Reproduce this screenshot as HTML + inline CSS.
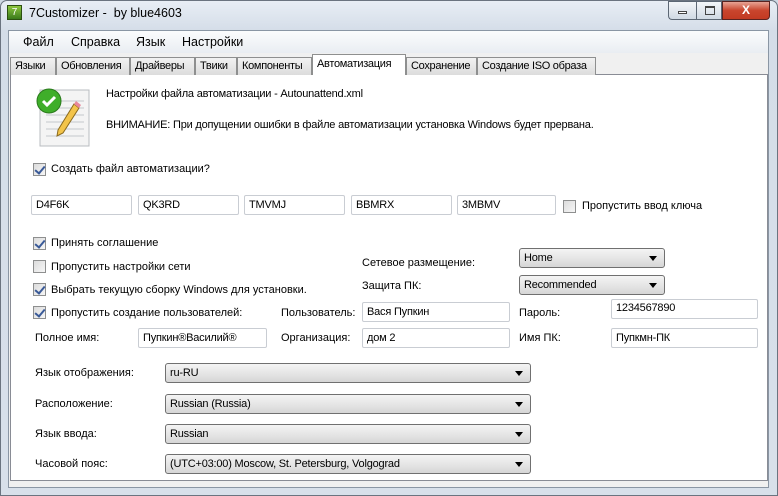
<!DOCTYPE html>
<html><head><meta charset="utf-8"><style>
*{box-sizing:border-box;margin:0;padding:0}
body{width:778px;height:496px;overflow:hidden;background:#cfd9e4;font-family:"Liberation Sans",sans-serif;font-size:11px;color:#000;position:relative}
.a{position:absolute;white-space:nowrap}
.frame{position:absolute;left:0;top:0;width:778px;height:496px;background:linear-gradient(#e8eef5,#d4dde8 30px,#d8e0ea);border:1px solid #6b7480;border-radius:7px 7px 0 0}
.client{position:absolute;left:8px;top:30px;width:761px;height:458px;background:#f0f0f0;border:1px solid #8a96a4}
.menu{position:absolute;left:9px;top:31px;width:759px;height:22px;background:linear-gradient(#fbfcfd,#e9edf2)}
.tab{position:absolute;top:57px;height:18px;background:linear-gradient(#f2f2f2,#dcdcdc);border:1px solid #8e8f8f;border-bottom:none;padding:2px 0 0 4px;font-size:11px;letter-spacing:-0.3px;white-space:nowrap;overflow:hidden}
.page{position:absolute;left:10px;top:74px;width:758px;height:407px;background:#fff;border:1px solid #898c95}
.cb{position:absolute;width:13px;height:13px;border:1px solid #8e8f8f;background:linear-gradient(135deg,#dcdcdc,#f6f6f6)}
.cb.c::after{content:"";position:absolute;left:3px;top:0px;width:4px;height:8px;border:solid #3a5a98;border-width:0 2px 2px 0;transform:rotate(40deg)}
.tb{position:absolute;height:20px;border:1px solid #c9cdd3;border-radius:2px;background:#fff;padding:3px 0 0 4px;font-size:11px;letter-spacing:-0.2px;white-space:nowrap}
.dd{position:absolute;height:20px;border:1px solid #707070;border-radius:3px;background:linear-gradient(#f4f4f4,#e6e6e6 50%,#d6d6d6);padding:3px 0 0 4px;font-size:11px;letter-spacing:-0.2px}
.dd::after{content:"";position:absolute;right:7px;top:7px;border:4px solid transparent;border-top:5px solid #000;border-bottom:none}
.btn{position:absolute;top:1px;height:19px;border:1px solid #5c6774;background:linear-gradient(#f3f6f9,#d0d9e3)}
</style></head><body>
<div class="frame"></div>
<div class="a" style="left:7px;top:5px;width:15px;height:15px;background:linear-gradient(#8cc63f,#3a7a1a);border:1px solid #2c5010;color:#fff;font-size:10px;text-align:center;line-height:13px">7</div>
<div class="a" style="left:29px;top:6px;font-size:12.5px">7Customizer -&nbsp; by blue4603</div>
<div class="btn" style="left:668px;width:28px;border-radius:0 0 0 4px;border-right:none"><div style="position:absolute;left:9px;top:9px;width:9px;height:3px;border:1px solid #444;background:#fff"></div></div>
<div class="btn" style="left:696px;width:26px;"><div style="position:absolute;left:8px;top:4px;width:10px;height:9px;border:1px solid #444;border-top-width:2px"></div></div>
<div class="btn" style="left:722px;width:48px;border-radius:0 0 4px 0;background:linear-gradient(#e8a495,#c9452d 50%,#c23a22);border-color:#5a2320;color:#fff;text-align:center;font-weight:bold;font-size:12px;line-height:16px">X</div>
<div class="client"></div>
<div class="menu"></div>
<div class="a" style="left:23px;top:35px;font-size:12.5px">Файл</div>
<div class="a" style="left:71px;top:35px;font-size:12.5px">Справка</div>
<div class="a" style="left:136px;top:35px;font-size:12.5px">Язык</div>
<div class="a" style="left:182px;top:35px;font-size:12.5px">Настройки</div>
<div class="page"></div>
<div class="tab" style="left:10px;width:46px">Языки</div>
<div class="tab" style="left:56px;width:74px">Обновления</div>
<div class="tab" style="left:130px;width:65px">Драйверы</div>
<div class="tab" style="left:195px;width:42px">Твики</div>
<div class="tab" style="left:237px;width:75px">Компоненты</div>
<div class="tab" style="left:312px;top:54px;height:21px;width:94px;background:#fff;padding-top:3px">Автоматизация</div>
<div class="tab" style="left:406px;width:71px">Сохранение</div>
<div class="tab" style="left:477px;width:119px">Создание ISO образа</div>
<svg class="a" style="left:34px;top:87px" width="58" height="62" viewBox="0 0 58 62">
<rect x="6" y="3" width="49" height="56" fill="#f4f4f4" stroke="#b9bcc0"/>
<g stroke="#c4c8cc"><line x1="12" y1="14" x2="50" y2="14"/><line x1="12" y1="21" x2="50" y2="21"/><line x1="12" y1="28" x2="50" y2="28"/><line x1="12" y1="35" x2="50" y2="35"/><line x1="12" y1="42" x2="50" y2="42"/><line x1="12" y1="49" x2="50" y2="49"/></g>
<circle cx="15" cy="14" r="12" fill="#3fae2a" stroke="#2a7a1c"/>
<path d="M9 14l4 4 8-8" stroke="#fff" stroke-width="3" fill="none"/>
<path d="M40 17l5 4-16 25-6 3 1-6z" fill="#f3c44a" stroke="#8a6a1e"/>
<path d="M40 17l5 4 2-3-5-4z" fill="#e9879a"/>
</svg>
<div class="a" style="left:106px;top:88px;letter-spacing:-0.2px">Настройки файла автоматизации - Autounattend.xml</div>
<div class="a" style="left:106px;top:119px;letter-spacing:-0.2px">ВНИМАНИЕ: При допущении ошибки в файле автоматизации установка Windows будет прервана.</div>
<div class="cb c" style="left:33px;top:163px"></div><div class="a" style="left:51px;top:163px">Создать файл автоматизации?</div>
<div class="tb" style="left:31px;top:195px;width:101px">D4F6K</div>
<div class="tb" style="left:138px;top:195px;width:101px">QK3RD</div>
<div class="tb" style="left:244px;top:195px;width:101px">TMVMJ</div>
<div class="tb" style="left:351px;top:195px;width:101px">BBMRX</div>
<div class="tb" style="left:457px;top:195px;width:99px">3MBMV</div>
<div class="cb" style="left:563px;top:200px"></div><div class="a" style="left:582px;top:200px">Пропустить ввод ключа</div>
<div class="cb c" style="left:33px;top:237px"></div><div class="a" style="left:51px;top:237px">Принять соглашение</div>
<div class="cb" style="left:33px;top:260px"></div><div class="a" style="left:51px;top:261px">Пропустить настройки сети</div>
<div class="cb c" style="left:33px;top:283px"></div><div class="a" style="left:51px;top:284px">Выбрать текущую сборку Windows для установки.</div>
<div class="cb c" style="left:33px;top:306px"></div><div class="a" style="left:51px;top:307px">Пропустить создание пользователей:</div>
<div class="a" style="left:362px;top:257px">Сетевое размещение:</div>
<div class="a" style="left:362px;top:280px">Защита ПК:</div>
<div class="dd" style="left:519px;top:248px;width:146px">Home</div>
<div class="dd" style="left:519px;top:275px;width:146px">Recommended</div>
<div class="a" style="left:281px;top:307px">Пользователь:</div>
<div class="tb" style="left:362px;top:302px;width:148px">Вася Пупкин</div>
<div class="a" style="left:519px;top:307px">Пароль:</div>
<div class="tb" style="left:611px;top:299px;width:147px;padding-top:2px">1234567890</div>
<div class="a" style="left:35px;top:332px">Полное имя:</div>
<div class="tb" style="left:138px;top:328px;width:129px">Пупкин®Василий®</div>
<div class="a" style="left:281px;top:332px">Организация:</div>
<div class="tb" style="left:362px;top:328px;width:148px">дом 2</div>
<div class="a" style="left:519px;top:332px">Имя ПК:</div>
<div class="tb" style="left:611px;top:328px;width:147px">Пупкмн-ПК</div>
<div class="a" style="left:35px;top:367px">Язык отображения:</div>
<div class="dd" style="left:165px;top:363px;width:366px">ru-RU</div>
<div class="a" style="left:35px;top:398px">Расположение:</div>
<div class="dd" style="left:165px;top:394px;width:366px">Russian (Russia)</div>
<div class="a" style="left:35px;top:428px">Язык ввода:</div>
<div class="dd" style="left:165px;top:424px;width:366px">Russian</div>
<div class="a" style="left:35px;top:458px">Часовой пояс:</div>
<div class="dd" style="left:165px;top:454px;width:366px">(UTC+03:00) Moscow, St. Petersburg, Volgograd</div>
</body></html>
